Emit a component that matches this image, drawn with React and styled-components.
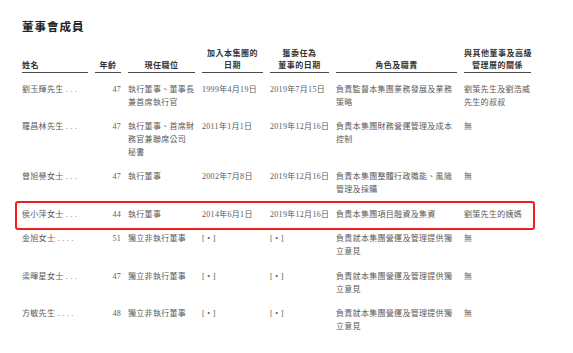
import React from "react";
import styled, { createGlobalStyle, css } from "styled-components";

const GlobalStyle = createGlobalStyle`
  html, body {
    margin: 0;
    padding: 0;
    background: #ffffff;
  }
  body {
    font-family: "Liberation Serif", "Noto Sans CJK TC", serif;
  }
`;

const columns = css`
  display: grid;
  grid-template-columns: 66px 26px 67px 61px 59px 121px 67px;
  column-gap: 7px;
`;

const Page = styled.div`
  width: 573px;
  height: 353px;
  box-sizing: border-box;
  padding: 19px 0 0 22px;
  overflow: hidden;
`;

const Table = styled.div`
  width: 509px;
`;

const Title = styled.h2`
  margin: 0 0 13px;
  font-family: "Liberation Serif", "Noto Sans CJK TC", serif;
  font-size: 11.5px;
  line-height: 16px;
  font-weight: 700;
  letter-spacing: 1px;
  color: #222;
`;

const HeaderRow = styled.div`
  ${columns};
  align-items: end;
  margin-bottom: 5px;
`;

const HeadCell = styled.div`
  border-bottom: 1.5px solid #4a4a4a;
  text-align: ${(p) => (p.$left ? "left" : "center")};
  font-size: 8px;
  line-height: 12px;
  font-weight: 700;
  letter-spacing: 0.5px;
  color: #333;
  white-space: nowrap;
`;

const Row = styled.div`
  ${columns};
  position: relative;
  padding: 5.9px 0;
  font-size: 8px;
  line-height: 12.8px;
  letter-spacing: 0.3px;
  color: #5a5a5a;

  ${(p) =>
    p.$highlight &&
    css`
      &::after {
        content: "";
        position: absolute;
        top: -2px;
        bottom: -2px;
        left: -7px;
        right: -4px;
        border: 2.5px solid #f21c1c;
        border-radius: 3px;
        pointer-events: none;
      }
    `}
`;

const Cell = styled.div`
  text-align: ${(p) => (p.$right ? "right" : "left")};
  white-space: nowrap;
`;

const Lines = ({ lines, ...rest }) => (
  <Cell {...rest}>
    {lines.map((l, i) => (
      <div key={i}>{l}</div>
    ))}
  </Cell>
);

const pending = "[ • ]";

const directors = [
  {
    name: "劉玉輝先生 . . .",
    age: 47,
    position: ["執行董事、董事長", "兼首席執行官"],
    joined: "1999年4月19日",
    appointed: "2019年7月15日",
    role: ["負責監督本集團業務發展及業務", "策略"],
    relation: ["劉策先生及劉浩威", "先生的叔叔"],
  },
  {
    name: "羅昌林先生 . . .",
    age: 47,
    position: ["執行董事、首席財", "務官兼聯席公司", "秘書"],
    joined: "2011年1月1日",
    appointed: "2019年12月16日",
    role: ["負責本集團財務營運管理及成本", "控制"],
    relation: ["無"],
  },
  {
    name: "曾旭譽女士 . . .",
    age: 47,
    position: ["執行董事"],
    joined: "2002年7月8日",
    appointed: "2019年12月16日",
    role: ["負責本集團整體行政職能、風險", "管理及採購"],
    relation: ["無"],
  },
  {
    name: "侯小萍女士 . . .",
    age: 44,
    position: ["執行董事"],
    joined: "2014年6月1日",
    appointed: "2019年12月16日",
    role: ["負責本集團項目融資及集資"],
    relation: ["劉策先生的姨媽"],
    highlight: true,
  },
  {
    name: "金旭女士 . . . .",
    age: 51,
    position: ["獨立非執行董事"],
    joined: pending,
    appointed: pending,
    role: ["負責就本集團營運及管理提供獨", "立意見"],
    relation: ["無"],
  },
  {
    name: "梁暉星女士 . . .",
    age: 47,
    position: ["獨立非執行董事"],
    joined: pending,
    appointed: pending,
    role: ["負責就本集團營運及管理提供獨", "立意見"],
    relation: ["無"],
  },
  {
    name: "方敏先生 . . . .",
    age: 48,
    position: ["獨立非執行董事"],
    joined: pending,
    appointed: pending,
    role: ["負責就本集團營運及管理提供獨", "立意見"],
    relation: ["無"],
  },
];

export default function App() {
  return (
    <Page>
      <GlobalStyle />
      <Title>董事會成員</Title>
      <Table>
        <HeaderRow>
          <HeadCell $left>姓名</HeadCell>
          <HeadCell>年齡</HeadCell>
          <HeadCell>現任職位</HeadCell>
          <HeadCell>
            加入本集團的
            <br />
            日期
          </HeadCell>
          <HeadCell>
            獲委任為
            <br />
            董事的日期
          </HeadCell>
          <HeadCell>角色及職責</HeadCell>
          <HeadCell>
            與其他董事及高級
            <br />
            管理層的關係
          </HeadCell>
        </HeaderRow>
        {directors.map((d) => (
          <Row key={d.name} $highlight={d.highlight}>
            <Cell>{d.name}</Cell>
            <Cell $right>{d.age}</Cell>
            <Lines lines={d.position} />
            <Cell>{d.joined}</Cell>
            <Cell>{d.appointed}</Cell>
            <Lines lines={d.role} />
            <Lines lines={d.relation} />
          </Row>
        ))}
      </Table>
    </Page>
  );
}
